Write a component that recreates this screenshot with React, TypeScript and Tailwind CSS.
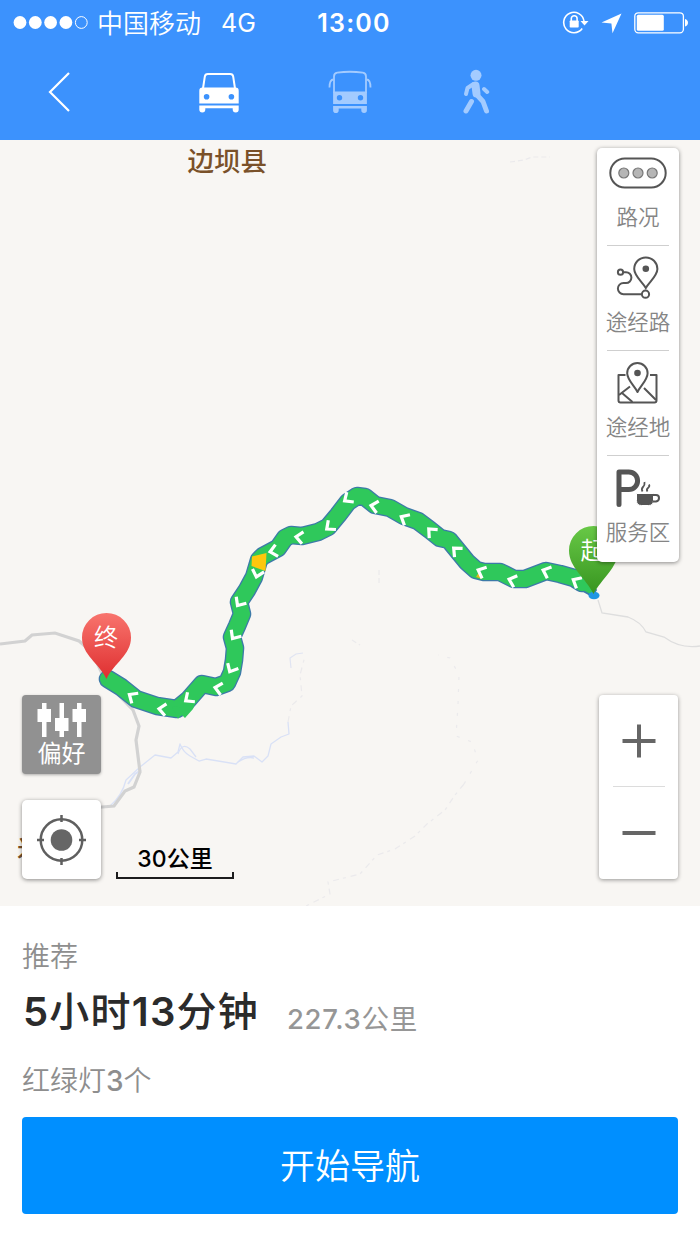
import React from 'react';

const ROUTE_PATH =
  'M108 679 L121 687 L136 699 L157 706 L177 709 L188 700 L202 684 L216 687 L227 683 L232 672 L234 660 L235 648 L232 637 L237 626 L242 614 L239 602 L247 590 L254 577 L259 560 L263 556 L278 548 L285 538 L291 535 L302 536 L318 532 L328 527 L338 515 L348 502 L357 496 L365 497 L375 505 L390 508 L404 516 L418 521 L430 530 L440 538 L449 540 L458 551 L467 562 L476 570 L484 572 L500 572 L514 579 L525 579 L546 571 L560 574 L574 578 L582 583';

// x, y and clockwise turn in degrees, 0 points to the left
const ARROWS: [number, number, number][] = [
  [576, 581, 25],
  [546, 571, 18],
  [512, 580, 15],
  [481, 571, 20],
  [456, 550, 40],
  [431, 531, 42],
  [404, 518, 25],
  [374, 506, 8],
  [347, 499, -38],
  [329, 527, -42],
  [299, 537, 5],
  [273, 551, -15],
  [257, 574, -78],
  [239, 603, -60],
  [234, 636, -60],
  [231, 669, -65],
  [218, 688, 8],
  [188, 699, -40],
  [162, 709, 5],
  [132, 696, 30],
];

const SignalDots = () => (
  <svg width="76" height="16" viewBox="0 0 76 16">
    {[7, 22.3, 37.6, 52.9].map((cx) => (
      <circle key={cx} cx={cx} cy="7.5" r="6.4" fill="#fff" />
    ))}
    <circle cx="68.3" cy="7.5" r="5.9" fill="none" stroke="#fff" strokeWidth="1" />
  </svg>
);

const RotationLockIcon = () => (
  <svg width="28" height="24" viewBox="0 0 28 24" fill="none" stroke="#fff">
    <path d="M20.2 17.5A10.2 10.2 0 1 1 22 10" strokeWidth="1.6" />
    <path d="M18.5 10h8l-4 4.6z" fill="#fff" stroke="none" />
    <rect x="7.7" y="9.5" width="9" height="7" rx=".8" fill="#fff" stroke="none" />
    <path d="M9.3 10V7.6a2.9 2.9 0 0 1 5.8 0V10" strokeWidth="1.6" />
  </svg>
);

const LocationArrowIcon = () => (
  <svg width="21" height="21" viewBox="0 0 21 21" fill="#fff">
    <path d="M20.5.5 11.5 20.2 10.4 10.6.5 9.5z" />
  </svg>
);

const BatteryIcon = () => (
  <svg width="54" height="22" viewBox="0 0 54 22">
    <rect x=".8" y=".8" width="48.6" height="20" rx="3.5" fill="none" stroke="#fff" strokeWidth="1.3" />
    <rect x="2.8" y="2.8" width="27" height="16" rx="1.5" fill="#fff" />
    <path d="M51 7q3 1 3 3.8T51 14.6z" fill="#fff" />
  </svg>
);

const CarIcon = () => (
  <svg width="42" height="42" viewBox="0 0 42 42" fill="#fff">
    <path d="M5 17.5 6.8 5.6Q7.2 3 9.8 3h22.4q2.6 0 3 2.6L37 17.5" fill="none" stroke="#fff" strokeWidth="2" />
    <path
      fillRule="evenodd"
      d="M4.5 16.5h33a3.2 3.2 0 0 1 3.2 3.2V32.5H1.3V19.7a3.2 3.2 0 0 1 3.2-3.2zM8.6 23a2.8 2.8 0 1 0 0 5.6 2.8 2.8 0 0 0 0-5.6zM33.4 23a2.8 2.8 0 1 0 0 5.6 2.8 2.8 0 0 0 0-5.6z"
    />
    <path d="M1.3 34.5h39.4v4a3 3 0 0 1-6 0v-1.3H7.3v1.3a3 3 0 0 1-6 0z" />
  </svg>
);

const BusIcon = () => (
  <svg width="44" height="44" viewBox="0 0 44 44" fill="#a3cbff">
    <path
      d="M6 23V6.5Q6 3.2 9.2 2.7 22 .8 34.8 2.7 38 3.2 38 6.5V23"
      fill="none"
      stroke="#a3cbff"
      strokeWidth="1.8"
    />
    <path d="M5.5 9.5Q1.5 9.5 1.5 17.5M38.5 9.5Q42.5 9.5 42.5 17.5" fill="none" stroke="#a3cbff" strokeWidth="1.8" />
    <path
      fillRule="evenodd"
      d="M5.1 21.5h33.8v12.5H5.1zM11.5 25a2.7 2.7 0 1 0 0 5.4 2.7 2.7 0 0 0 0-5.4zM32.5 25a2.7 2.7 0 1 0 0 5.4 2.7 2.7 0 0 0 0-5.4z"
    />
    <path d="M5.1 36h33.8v4.3a2.8 2.8 0 0 1-5.6 0v-1.7H10.7v1.7a2.8 2.8 0 0 1-5.6 0z" />
  </svg>
);

const WalkIcon = () => (
  <svg width="28" height="46" viewBox="0 0 28 46" fill="none" stroke="#a3cbff" strokeLinecap="round" strokeLinejoin="round">
    <circle cx="14" cy="6.3" r="5.5" fill="#a3cbff" stroke="none" />
    <path d="M11.5 15 5.5 19 4 25" strokeWidth="4" />
    <path d="M13.5 16.5 14.5 24.5" strokeWidth="8" />
    <path d="M15.5 26.5 21 32.5 24.5 42" strokeWidth="5" />
    <path d="M9.5 32.5 4 42" strokeWidth="5" />
    <path d="M22 20 25.2 23" strokeWidth="4" />
  </svg>
);

const TrafficIcon = () => (
  <svg width="58" height="32" viewBox="0 0 58 32" stroke="#555">
    <rect x="1.3" y="1.5" width="55.4" height="29" rx="14.5" fill="#fff" strokeWidth="2" />
    {[14.8, 29, 43.2].map((cx) => (
      <circle key={cx} cx={cx} cy="16" r="5" fill="#b5b5b5" stroke="#777" strokeWidth="1.2" />
    ))}
  </svg>
);

const ViaRoadIcon = () => (
  <svg width="44" height="44" viewBox="0 0 44 44" fill="none" stroke="#555" strokeWidth="2">
    <path d="M29.8 32C26.5 26 18.2 20 18.2 13a11.6 11.6 0 0 1 23.2 0C41.4 20 33.1 26 29.8 32z" />
    <circle cx="29.8" cy="12.7" r="3.3" fill="#555" stroke="none" />
    <circle cx="4.5" cy="16.2" r="2.6" />
    <path d="M7.2 16.2H10a5.4 5.4 0 0 1 0 10.8H7.5a5.5 5.5 0 0 0 0 11.2H25.5" />
    <circle cx="29.5" cy="38.2" r="3.6" />
  </svg>
);

const ViaPlaceIcon = () => (
  <svg width="44" height="44" viewBox="0 0 44 44" fill="none" stroke="#555" strokeWidth="2" strokeLinejoin="round">
    <path d="M9.5 14H2.5V39.5q0 2 2 2h34q2 0 2-2V14H34" />
    <path d="M21.5 31C18.7 25 11.2 19 11.2 12.2a10.2 10.2 0 0 1 20.4 0C31.6 19 24.300 25 21.5 31z" />
    <circle cx="21.5" cy="12" r="3.3" fill="#555" stroke="none" />
    <path d="M14 25.5 3 34M6 32 16.5 41M28 27 40 39" />
  </svg>
);

const ServiceIcon = () => (
  <svg width="46" height="44" viewBox="0 0 46 44" fill="none" stroke="#555">
    <path d="M4 38.5V6H13.8a8.8 8.8 0 0 1 0 17.6H4.8" strokeWidth="5" strokeLinecap="round" strokeLinejoin="round" />
    <path d="M21.5 27.5H38.5V34.5q0 5-5 5H26.5q-5 0-5-5z" fill="#555" stroke="#fff" strokeWidth="1" />
    <path d="M38 29h3q3 0 3 3t-3 3.5h-3" strokeWidth="2" />
    <path d="M27.5 25.5q-1.5-2.500.5-4.500t1.500-5M32.500 25.500q-1.500-2 .5-3.500t1-3.500" strokeWidth="1.8" />
  </svg>
);

const TOOLS = [
  { label: '路况', Icon: TrafficIcon },
  { label: '途经路', Icon: ViaRoadIcon },
  { label: '途经地', Icon: ViaPlaceIcon },
  { label: '服务区', Icon: ServiceIcon },
];

const PIN_FONT = 'font-["Noto_Sans_CJK_SC",sans-serif] text-[24px] font-[350]';

const MapCanvas = () => (
  <svg className="block" width="700" height="766" viewBox="0 140 700 766" fill="none">
    <defs>
      <linearGradient id="endPin" x1="0" y1="0" x2="0" y2="1">
        <stop offset="0" stopColor="#f8746d" />
        <stop offset="1" stopColor="#df2f30" />
      </linearGradient>
      <linearGradient id="startPin" x1="0" y1="0" x2="0" y2="1">
        <stop offset="0" stopColor="#68c846" />
        <stop offset="1" stopColor="#379520" />
      </linearGradient>
    </defs>

    {/* rivers */}
    <g stroke="#d9e1f6" strokeWidth="1.3" strokeLinejoin="round">
      <path d="M110 806Q122 796 126 780L140 767 155 755 171 758 178 752 180 744Q183 752 190 756L199 761 206 759 236 764 243 757 254 756 262 762 268 756 271 744 281 737 289 734 288 722" />
      <path d="M178 754q4-12 12-5l6 8M238 762q9-6 16-4" />
      <path d="M128 784l7-10 6-4" strokeWidth="2" />
    </g>
    <g stroke="#ebeaec" strokeWidth="1.2" strokeDasharray="6 5 3 4">
      <path d="M288 722 291 706 302 696 300 675 305 656" />
      <path d="M291 668 290 658 296 654 303 653" stroke="#e0e4f2" strokeDasharray="none" />
      <path d="M464 784 455 795 445 810 427 824 415 836 395 849 377 855 360 874 328 882 330 894 306 906" />
      <path d="M464 784 478 760 472 742 456 736 458 705 459 675 450 658 438 655" strokeDasharray="3 9" />
      <path d="M352 640l8 5M379 570v13M510 162l14-2 8-3h18" strokeDasharray="5 3" />
    </g>

    {/* roads */}
    <path d="M0 644 25 641 32 635 55 633 79 641 92 652 106 682 133 710 139 726 136 740 140 772 134 787 125 791 114 806 90 808" stroke="#d2d2d2" strokeWidth="3.2" />
    <path d="M598 600 602 613 628 617Q641 622 646 632L664 637Q680 649 700 646" stroke="#dedede" strokeWidth="1.3" />

    <g strokeLinejoin="round" strokeLinecap="round">
      <path d={ROUTE_PATH} stroke="#3d7aa8" strokeWidth="18.6" />
      <path d="M576 587 592 596 596 590 586 576z" fill="#2fc85b" stroke="#3d7aa8" strokeWidth="2" />
      <path d={ROUTE_PATH} stroke="#2fc85b" strokeWidth="16" />
    </g>
    <path d="M185 718l8-9 2-5-9-2-7 10zM178 719l8-11-14-2z" fill="#2fc85b" />
    <path d="M252 556.5 266.5 553 265.5 571 251.5 566z" fill="#fdc70c" />
    <path d="M476 577l6 2-3-7z" fill="#e0b61d" />
    <ellipse cx="594" cy="595.5" rx="5.5" ry="3.8" fill="#1f96e3" />

    <g stroke="#fff" strokeWidth="3.2">
      {ARROWS.map(([x, y, turn]) => (
        <path key={`${x}-${y}`} d="M4-5.5-3 0 3.5 6.5" transform={`translate(${x} ${y}) rotate(${turn})`} />
      ))}
    </g>

    <path d="M593.5 594C586 578 569 568 569 550.5a24.5 24.5 0 0 1 49 0C618 568 602 578 593.5 594z" fill="url(#startPin)" />
    <text x="580.5" y="559" fill="#fff" className={PIN_FONT}>起</text>

    <path d="M106.5 679C99 663 82 655 82 637.5a24.5 24.5 0 0 1 49 0C131 655 114 663 106.5 679z" fill="url(#endPin)" />
    <text x="94" y="646" fill="#fff" className={PIN_FONT}>终</text>

    <text x="187.5" y="171" fill="#7a5129" className='font-["Noto_Sans_CJK_SC",sans-serif] text-[26.5px] font-medium'>边坝县</text>
    <text x="17" y="857" fill="#7a5129" className='font-["Noto_Sans_CJK_SC",sans-serif] text-[24px] font-medium'>米</text>
  </svg>
);

const Header = () => (
  <header className="h-[140px] bg-[#3c92fd] text-white">
    <div className="grid h-[46px] grid-cols-[1fr_auto_1fr] items-center pr-[12px] pl-[13px]">
      <div className="flex items-center leading-none">
        <SignalDots />
        <span className="ml-[8px] pt-[2px] text-[26px] font-[350]">中国移动</span>
        <span className="ml-[20px] text-[25px] tracking-[0.2px]">4G</span>
      </div>
      <span className="mr-[-7px] text-[25px] leading-none font-semibold tracking-[1.2px]">13:00</span>
      <div className="flex items-center justify-end">
        <RotationLockIcon />
        <span className="ml-[11px]"><LocationArrowIcon /></span>
        <span className="ml-[12px]"><BatteryIcon /></span>
      </div>
    </div>
    <nav className="flex h-[92px] items-center pl-[47px]">
      <svg width="24" height="42" viewBox="0 0 24 42" fill="none" stroke="#fff" strokeWidth="2.2">
        <path d="M22 2 3 21l19 19" />
      </svg>
      <div className="ml-[127px] flex items-center">
        <CarIcon />
        <div className="ml-[88px]"><BusIcon /></div>
        <div className="ml-[90px]"><WalkIcon /></div>
      </div>
    </nav>
  </header>
);

const ToolPanel = () => (
  <div className="absolute top-[8px] left-[597px] h-[414px] w-[82px] rounded-[5px] bg-white shadow-[0_1px_4px_rgba(0,0,0,0.45)]">
    <div className="-mt-[7px] flex flex-col px-[10px]">
      {TOOLS.map(({ label, Icon }, i) => (
        <div
          key={label}
          className={`flex h-[105px] flex-col items-center pt-[10px] ${i < TOOLS.length - 1 ? 'border-b border-[#cfcfcf]' : ''}`}
        >
          <div className="flex h-[44px] items-center justify-center"><Icon /></div>
          <span className="mt-[11px] text-[21.5px] leading-[22px] font-[350] whitespace-nowrap text-[#858585]">{label}</span>
        </div>
      ))}
    </div>
  </div>
);

const MapControls = () => (
  <>
    <button className="absolute top-[555px] left-[22px] flex h-[79px] w-[79px] flex-col items-center rounded-[4px] bg-[#919191] pt-[7px] text-white shadow-[0_1px_3px_rgba(0,0,0,0.3)]">
      <svg width="50" height="36" viewBox="0 0 50 36" fill="#fff">
        <path d="M5 1h4.5v34H5zM.5 7h13.500v13H.5zM22.500 1H27v34h-4.500zM18 16h13.500v13H18zM40 1h4.500v34H40zM35.500 7H49v13H35.500z" />
      </svg>
      <span className="mt-[4px] text-[24px] leading-[24px]">偏好</span>
    </button>

    <button className="absolute top-[660px] left-[22px] flex h-[79px] w-[79px] items-center justify-center rounded-[5px] bg-white shadow-[0_1px_4px_rgba(0,0,0,0.45)]">
      <svg width="50" height="50" viewBox="0 0 50 50" fill="none" stroke="#5f5f5f">
        <circle cx="24.5" cy="25" r="20.8" strokeWidth="2.5" />
        <circle cx="24.5" cy="25" r="10.8" fill="#666" stroke="none" />
        <path d="M24.5 0v7M24.5 43v7M0 25h7M42 25h7" strokeWidth="2.5" />
      </svg>
    </button>

    <div className="absolute top-[706px] left-[116px] flex w-[118px] flex-col items-center">
      <span className="text-[23px] leading-[26px] font-medium text-black">30公里</span>
      <div className="h-[7px] w-full border-x-2 border-b-2 border-[#1c1c1c]" />
    </div>

    <div className="absolute top-[555px] left-[599px] flex h-[184px] w-[79px] flex-col items-center rounded-[4px] bg-white shadow-[0_1px_4px_rgba(0,0,0,0.4)]">
      <button className="flex h-[92px] w-[52px] items-center justify-center border-b border-[#dcdcdc]">
        <svg width="34" height="34" viewBox="0 0 34 34" stroke="#666" strokeWidth="4">
          <path d="M17 .5v33M.5 17h33" />
        </svg>
      </button>
      <button className="flex h-[92px] w-[52px] items-center justify-center">
        <svg width="34" height="34" viewBox="0 0 34 34" stroke="#666" strokeWidth="4">
          <path d="M.5 17h33" />
        </svg>
      </button>
    </div>
  </>
);

const RouteSummary = () => (
  <section className="flex flex-col px-[22px] pt-[37px]">
    <p className="text-[28px] leading-[28px] font-[350] text-[#8e8e8e]">推荐</p>
    <div className="mt-[19px] flex h-[44px] items-baseline">
      <h1 className="pl-[1px] text-[40px] leading-[44px] font-semibold tracking-[1.2px] text-[#2b2b2b]">
        5<span className="font-medium">小时</span>13<span className="font-medium">分钟</span>
      </h1>
      <span className="ml-[28px] translate-y-[3px] text-[27.5px] leading-[30px] font-medium tracking-[0.7px] text-[#969696]">
        227.3<span className="font-normal">公里</span>
      </span>
    </div>
    <p className="mt-[33px] text-[28px] leading-[28px] text-[#8e8e8e]">
      <span className="font-[350]">红绿灯</span>
      <span className="font-medium">3</span>
      <span className="font-[350]">个</span>
    </p>
    <button className="mt-[22px] h-[97px] rounded-[4px] bg-[#008fff] pt-[2px] text-[35px] font-[350] text-white">开始导航</button>
  </section>
);

export default function App() {
  return (
    <div className='h-[1242px] w-[700px] overflow-hidden bg-white font-["Inter","Noto_Sans_CJK_SC",sans-serif]'>
      <Header />
      <main className="relative h-[766px] overflow-hidden bg-[#f8f6f3]">
        <MapCanvas />
        <ToolPanel />
        <MapControls />
      </main>
      <RouteSummary />
    </div>
  );
}
